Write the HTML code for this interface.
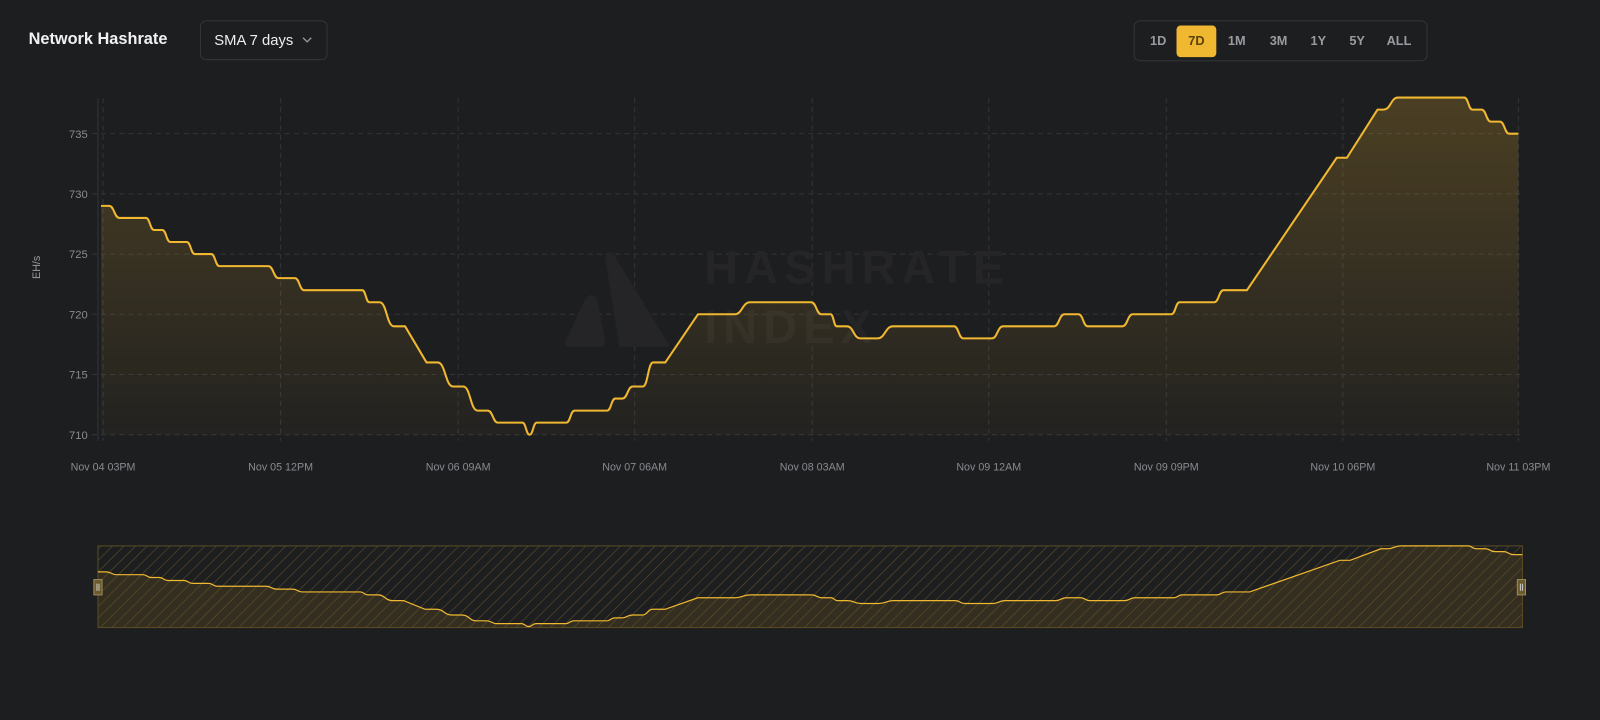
<!DOCTYPE html>
<html><head><meta charset="utf-8"><style>
html,body{margin:0;padding:0;background:#1d1e20;width:1600px;height:720px;overflow:hidden;font-family:"Liberation Sans",sans-serif}
#w{position:absolute;left:0;top:0;width:1568px;height:706px;transform:scale(1.0204);transform-origin:0 0}
.title{position:absolute;left:28px;top:30px;color:#f2f2f2;font-weight:bold;font-size:16px}
.sel{position:absolute;left:196px;top:20px;width:125px;height:39px;box-sizing:border-box;border:1px solid #34353a;border-radius:6px;color:#eee;font-size:14.5px;line-height:38px;padding-left:13px}
.sel svg{position:absolute;right:14px;top:15px}
.rng{position:absolute;left:1111px;top:20px;width:288px;height:40px;box-sizing:border-box;border:1px solid #34353a;border-radius:6px}
.rng span{position:absolute;top:4px;height:31px;line-height:31px;font-size:12.5px;color:#9a9ba0;font-weight:bold;text-align:center}
.rng .on{background:#f0b731;color:#5a4208;border-radius:4px;width:39px}
</style></head><body><div id="w">
<div class="title">Network Hashrate</div>
<div class="sel">SMA 7 days<svg width="10" height="7" viewBox="0 0 10 7"><path d="M1 1l4 4 4-4" stroke="#999" stroke-width="1.3" fill="none"/></svg></div>
<div class="rng">
<span style="left:12px;width:22px">1D</span>
<span class="on" style="left:41px">7D</span>
<span style="left:88px;width:24px">1M</span>
<span style="left:128px;width:26px">3M</span>
<span style="left:169px;width:22px">1Y</span>
<span style="left:207px;width:22px">5Y</span>
<span style="left:245px;width:28px">ALL</span>
</div>
<svg id="c" width="1568" height="706" style="position:absolute;left:0;top:0" font-family="Liberation Sans, sans-serif"></svg>
</div>
<script>
var P=[[99,729],[107,729],[117,728],[143,728],[151,727],[159,727],[167,726],[183,726],[191,725],[207,725],[215,724],[263,724],[273,723],[289,723],[298,722],[355,722],[362,721],[372,721],[386,719],[397,719],[418,716],[429,716],[444,714],[454,714],[468,712],[478,712],[488,711],[512,711],[519,710],[526,711],[555,711],[563,712],[595,712],[603,713],[610,713],[620,714],[630,714],[640,716],[652,716],[684,720],[720,720],[735,721],[795,721],[805,720],[814,720],[820,719],[830,719],[843,718],[860,718],[875,719],[935,719],[944,718],[972,718],[983,719],[1033,719],[1043,720],[1057,720],[1066,719],[1100,719],[1110,720],[1148,720],[1156,721],[1190,721],[1199,722],[1222,722],[1310,733],[1320,733],[1350,737],[1356,737],[1370,738],[1435,738],[1443,737],[1452,737],[1461,736],[1470,736],[1479,735],[1488,735]];
function Y(v){return 426-(v-710)*11.8}
function NX(x){return 96+(x-99)*(1396/1389)}
function NY(v){return 614-(v-710)*(79/28)}
var s='<defs><linearGradient id="g" x1="0" y1="0" x2="0" y2="1"><stop offset="0" stop-color="#f0b731" stop-opacity="0.22"/><stop offset="1" stop-color="#f0b731" stop-opacity="0.03"/></linearGradient><pattern id="h" width="8" height="8" patternUnits="userSpaceOnUse" patternTransform="rotate(45)"><line x1="0" y1="0" x2="0" y2="8" stroke="#6b5a2a" stroke-width="1.2"/></pattern></defs>';
var ys=[735,730,725,720,715,710];
ys.forEach(function(v){var y=Y(v);s+='<line x1="90" x2="1490" y1="'+y+'" y2="'+y+'" stroke="#333438" stroke-dasharray="5,4"/><text x="86" y="'+(y+4)+'" fill="#8a8b90" font-size="11" text-anchor="end">'+v+'</text>';});
var xs=[101,275,449,622,796,969,1143,1316,1488];
var lb=['Nov 04 03PM','Nov 05 12PM','Nov 06 09AM','Nov 07 06AM','Nov 08 03AM','Nov 09 12AM','Nov 09 09PM','Nov 10 06PM','Nov 11 03PM'];
xs.forEach(function(x,i){s+='<line x1="'+x+'" x2="'+x+'" y1="96" y2="432" stroke="#333438" stroke-dasharray="5,4"/><text x="'+x+'" y="461" fill="#8a8b90" font-size="10.5" text-anchor="middle">'+lb[i]+'</text>';});
s+='<line x1="96" x2="96" y1="96" y2="432" stroke="#333438"/>';
s+='<text transform="translate(39,262) rotate(-90)" fill="#9a9ba0" font-size="10.5" text-anchor="middle">EH/s</text>';
s+='<g fill="#252527"><path d="M572 296 Q580 282 586 296 L593 334 Q594 340 587 340 L558 340 Q551 340 555 333 Z"/><path d="M593 252 Q598 242 603 252 L657 340 L607 340 Z"/></g>';
s+='<text x="690" y="278" fill="#252527" font-size="46" font-weight="bold" letter-spacing="6">HASHRATE</text><text x="690" y="336" fill="#252527" font-size="46" font-weight="bold" letter-spacing="6">INDEX</text>';
function path(fx,fy){var d='';P.forEach(function(p,i){var x=fx(p[0]),y=fy(p[1]);if(!i){d+='M'+x.toFixed(1)+' '+y.toFixed(1);return;}var q=P[i-1],x0=fx(q[0]),y0=fy(q[1]);if(q[1]!=p[1]&&p[0]-q[0]<=20){var m=(x0+x)/2;d+='C'+m.toFixed(1)+' '+y0.toFixed(1)+' '+m.toFixed(1)+' '+y.toFixed(1)+' '+x.toFixed(1)+' '+y.toFixed(1);}else d+='L'+x.toFixed(1)+' '+y.toFixed(1);});return d;}
var d=path(function(x){return x},Y),nd=path(NX,NY);
s+='<path d="'+d+'L1488 426L99 426Z" fill="url(#g)"/><path d="'+d+'" fill="none" stroke="#f0b731" stroke-width="2" stroke-linejoin="round"/>';
s+='<path d="'+nd+'L1492 615L96 615Z" fill="#3a3220" opacity="0.8"/>';
s+='<rect x="96" y="535" width="1396" height="80" fill="url(#h)" opacity="0.8"/>';
s+='<rect x="96" y="535" width="1396" height="80" fill="none" stroke="#5a4c25"/>';
s+='<path d="'+nd+'" fill="none" stroke="#f0b731" stroke-width="1.2"/>';
[96,1491].forEach(function(x){s+='<rect x="'+(x-4)+'" y="568" width="8" height="15" fill="#6b5a2a" stroke="#9a8c60"/><line x1="'+(x-1)+'" x2="'+(x-1)+'" y1="572" y2="579" stroke="#ccc"/><line x1="'+(x+1)+'" x2="'+(x+1)+'" y1="572" y2="579" stroke="#ccc"/>';});
document.getElementById('c').innerHTML=s;
</script>
</body></html>
